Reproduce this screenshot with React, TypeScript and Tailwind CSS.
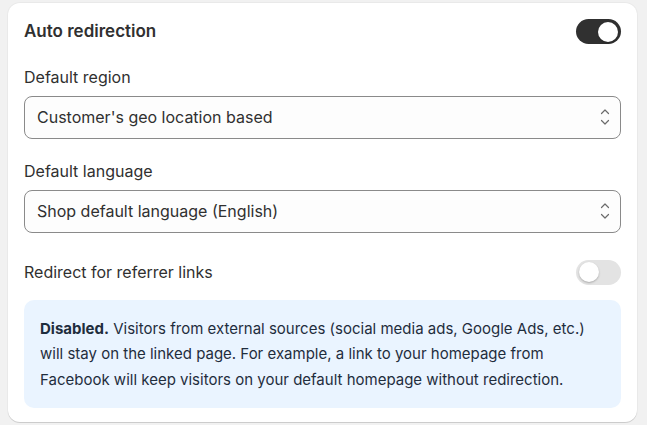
import { useState } from "react";

const Toggle = ({ on, onChange }: { on: boolean; onChange: () => void }) => {
  return (
    <button
      type="button"
      onClick={onChange}
      className={`relative h-[25px] w-[45px] shrink-0 rounded-full transition-colors ${on ? "bg-[#303030]" : "bg-[#e3e3e3]"}`}
    >
      <span
        className={`absolute top-[2.5px] h-5 w-5 rounded-full bg-white shadow-[0_1px_2px_rgba(0,0,0,0.25)] transition-all ${on ? "left-[22px]" : "left-[3px]"}`}
      />
    </button>
  );
};

const SelectBox = ({ value }: { value: string }) => {
  return (
    <div className="flex h-[43px] items-center justify-between rounded-lg border border-[#8a8a8a] bg-[#fdfdfd] pl-3 pr-[9px]">
      <span className="text-[16px] text-[#303030]">{value}</span>
      <svg width="12" height="24" viewBox="0 0 12 24" fill="none" stroke="#6b6b6b" strokeWidth="1.2" strokeLinecap="round" strokeLinejoin="round">
        <path d="M2.5 8.5 6 5l3.5 3.5" />
        <path d="M2.5 15.5 6 19l3.5-3.5" />
      </svg>
    </div>
  );
};

const App = () => {
  const [auto, setAuto] = useState(true);
  const [referrer, setReferrer] = useState(false);

  return (
    <div className="min-h-[425px] bg-[#f1f1f1] px-2 pt-[3px] font-['Inter',sans-serif] text-[#303030]">
      <div className="flex w-[629px] flex-col rounded-xl bg-white px-4 pb-[14px] pt-4 shadow-[0_1px_0_rgba(0,0,0,0.12),0_0_0_1px_rgba(0,0,0,0.03)]">
        <div className="flex items-center justify-between">
          <h2 className="text-[17px] font-semibold">Auto redirection</h2>
          <Toggle on={auto} onChange={() => setAuto(!auto)} />
        </div>

        <label className="mt-[21px] mb-2 text-[16px] leading-[22px]">Default region</label>
        <SelectBox value="Customer's geo location based" />

        <label className="mt-[21px] mb-2 text-[16px] leading-[22px]">Default language</label>
        <SelectBox value="Shop default language (English)" />

        <div className="mt-[27px] flex items-center justify-between">
          <span className="text-[16px]">Redirect for referrer links</span>
          <Toggle on={referrer} onChange={() => setReferrer(!referrer)} />
        </div>

        <div className="mt-[15px] rounded-[10px] bg-[#eaf4ff] px-4 py-4 text-[15px] leading-[25.5px] text-[#1f2d3d]">
          <span className="font-bold">Disabled.</span> Visitors from external sources (social media ads, Google Ads, etc.)
          will stay on the linked page. For example, a link to your homepage from Facebook will keep visitors on your
          default homepage without redirection.
        </div>
      </div>
    </div>
  );
};

export default App;
